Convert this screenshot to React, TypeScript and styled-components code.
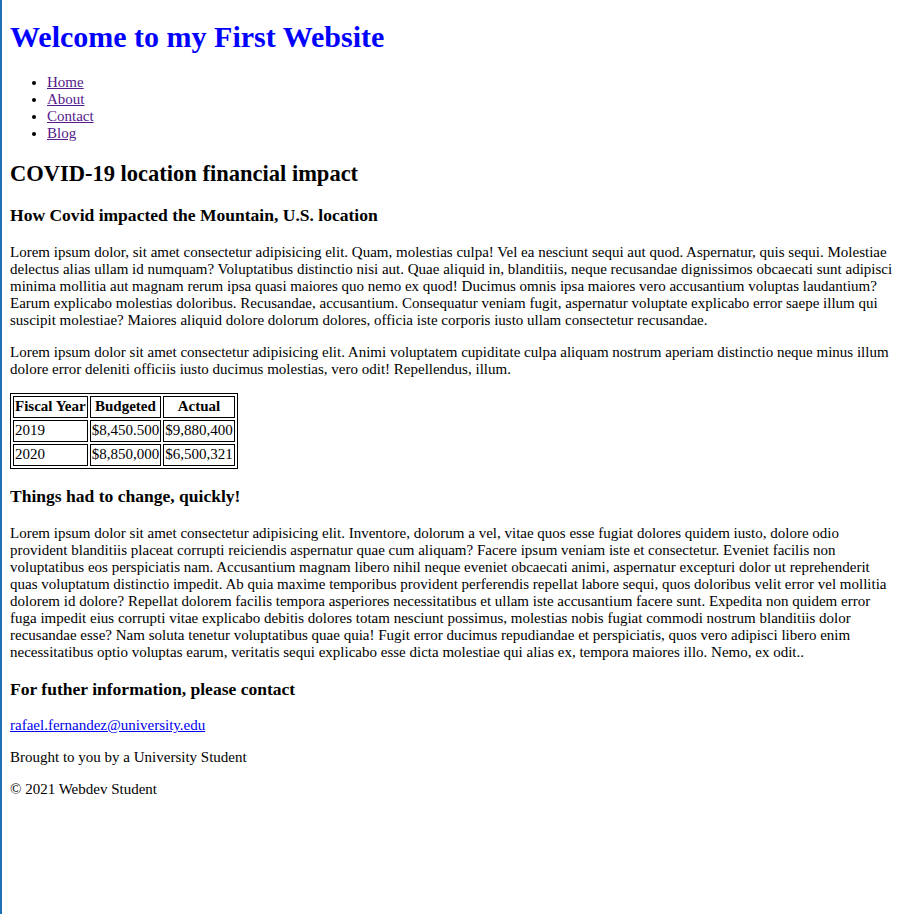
import styled, { createGlobalStyle } from "styled-components";

const GlobalStyle = createGlobalStyle`
  html {
    min-height: 100%;
    box-sizing: border-box;
    border-left: 2px solid #1d6fb6;
  }
  body {
    margin: 8px;
    font-family: "Liberation Serif", "Times New Roman", serif;
    font-size: 15px;
    color: #000;
    background: #fff;
  }
`;

const Title = styled.h1`
  color: #0000ff;
  font-size: 2em;
  margin: 12px 0 20px;
`;

const NavList = styled.ul`
  margin: 1em 0;
  padding-left: 37px;
`;

const NavLink = styled.a`
  color: #551a8b;
  text-decoration: underline;
`;

const SectionTitle = styled.h2`
  font-size: 1.5em;
  margin: 0.83em 0;
`;

const SubTitle = styled.h3`
  font-size: 1.17em;
  margin: 1em 0;
`;

const Text = styled.p`
  margin: 1em 0;
`;

const MailLink = styled.a`
  color: #0000ee;
`;

const BudgetTable = styled.table`
  border: 1px solid #000;
  border-spacing: 2px;

  & th,
  & td {
    border: 1px solid #000;
    padding: 1.5px 1px;
  }
`;

const rows = [
  { year: "2019", budgeted: "$8,450.500", actual: "$9,880,400" },
  { year: "2020", budgeted: "$8,850,000", actual: "$6,500,321" },
];

export default function App() {
  return (
    <>
      <GlobalStyle />
      <header>
        <Title>Welcome to my First Website</Title>
        <nav>
          <NavList>
            {["Home", "About", "Contact", "Blog"].map((item) => (
              <li key={item}>
                <NavLink href="#">{item}</NavLink>
              </li>
            ))}
          </NavList>
        </nav>
      </header>
      <main>
        <SectionTitle>COVID-19 location financial impact</SectionTitle>
        <SubTitle>How Covid impacted the Mountain, U.S. location</SubTitle>
        <Text>
          Lorem ipsum dolor, sit amet consectetur adipisicing elit. Quam, molestias culpa! Vel ea
          nesciunt sequi aut quod. Aspernatur, quis sequi. Molestiae delectus alias ullam id
          numquam? Voluptatibus distinctio nisi aut. Quae aliquid in, blanditiis, neque recusandae
          dignissimos obcaecati sunt adipisci minima mollitia aut magnam rerum ipsa quasi maiores
          quo nemo ex quod! Ducimus omnis ipsa maiores vero accusantium voluptas laudantium? Earum
          explicabo molestias doloribus. Recusandae, accusantium. Consequatur veniam fugit,
          aspernatur voluptate explicabo error saepe illum qui suscipit molestiae? Maiores aliquid
          dolore dolorum dolores, officia iste corporis iusto ullam consectetur recusandae.
        </Text>
        <Text>
          Lorem ipsum dolor sit amet consectetur adipisicing elit. Animi voluptatem cupiditate culpa
          aliquam nostrum aperiam distinctio neque minus illum dolore error deleniti officiis iusto
          ducimus molestias, vero odit! Repellendus, illum.
        </Text>
        <BudgetTable>
          <thead>
            <tr>
              <th>Fiscal Year</th>
              <th>Budgeted</th>
              <th>Actual</th>
            </tr>
          </thead>
          <tbody>
            {rows.map((r) => (
              <tr key={r.year}>
                <td>{r.year}</td>
                <td>{r.budgeted}</td>
                <td>{r.actual}</td>
              </tr>
            ))}
          </tbody>
        </BudgetTable>
        <SubTitle>Things had to change, quickly!</SubTitle>
        <Text>
          Lorem ipsum dolor sit amet consectetur adipisicing elit. Inventore, dolorum a vel, vitae
          quos esse fugiat dolores quidem iusto, dolore odio provident blanditiis placeat corrupti
          reiciendis aspernatur quae cum aliquam? Facere ipsum veniam iste et consectetur. Eveniet
          facilis non voluptatibus eos perspiciatis nam. Accusantium magnam libero nihil neque
          eveniet obcaecati animi, aspernatur excepturi dolor ut reprehenderit quas voluptatum
          distinctio impedit. Ab quia maxime temporibus provident perferendis repellat labore sequi,
          quos doloribus velit error vel mollitia dolorem id dolore? Repellat dolorem facilis tempora
          asperiores necessitatibus et ullam iste accusantium facere sunt. Expedita non quidem error
          fuga impedit eius corrupti vitae explicabo debitis dolores totam nesciunt possimus,
          molestias nobis fugiat commodi nostrum blanditiis dolor recusandae esse? Nam soluta tenetur
          voluptatibus quae quia! Fugit error ducimus repudiandae et perspiciatis, quos vero
          adipisci libero enim necessitatibus optio voluptas earum, veritatis sequi explicabo esse
          dicta molestiae qui alias ex, tempora maiores illo. Nemo, ex odit..
        </Text>
      </main>
      <footer>
        <SubTitle>For futher information, please contact</SubTitle>
        <Text>
          <MailLink href="#">rafael.fernandez@university.edu</MailLink>
        </Text>
        <Text>Brought to you by a University Student</Text>
        <Text>© 2021 Webdev Student</Text>
      </footer>
    </>
  );
}
